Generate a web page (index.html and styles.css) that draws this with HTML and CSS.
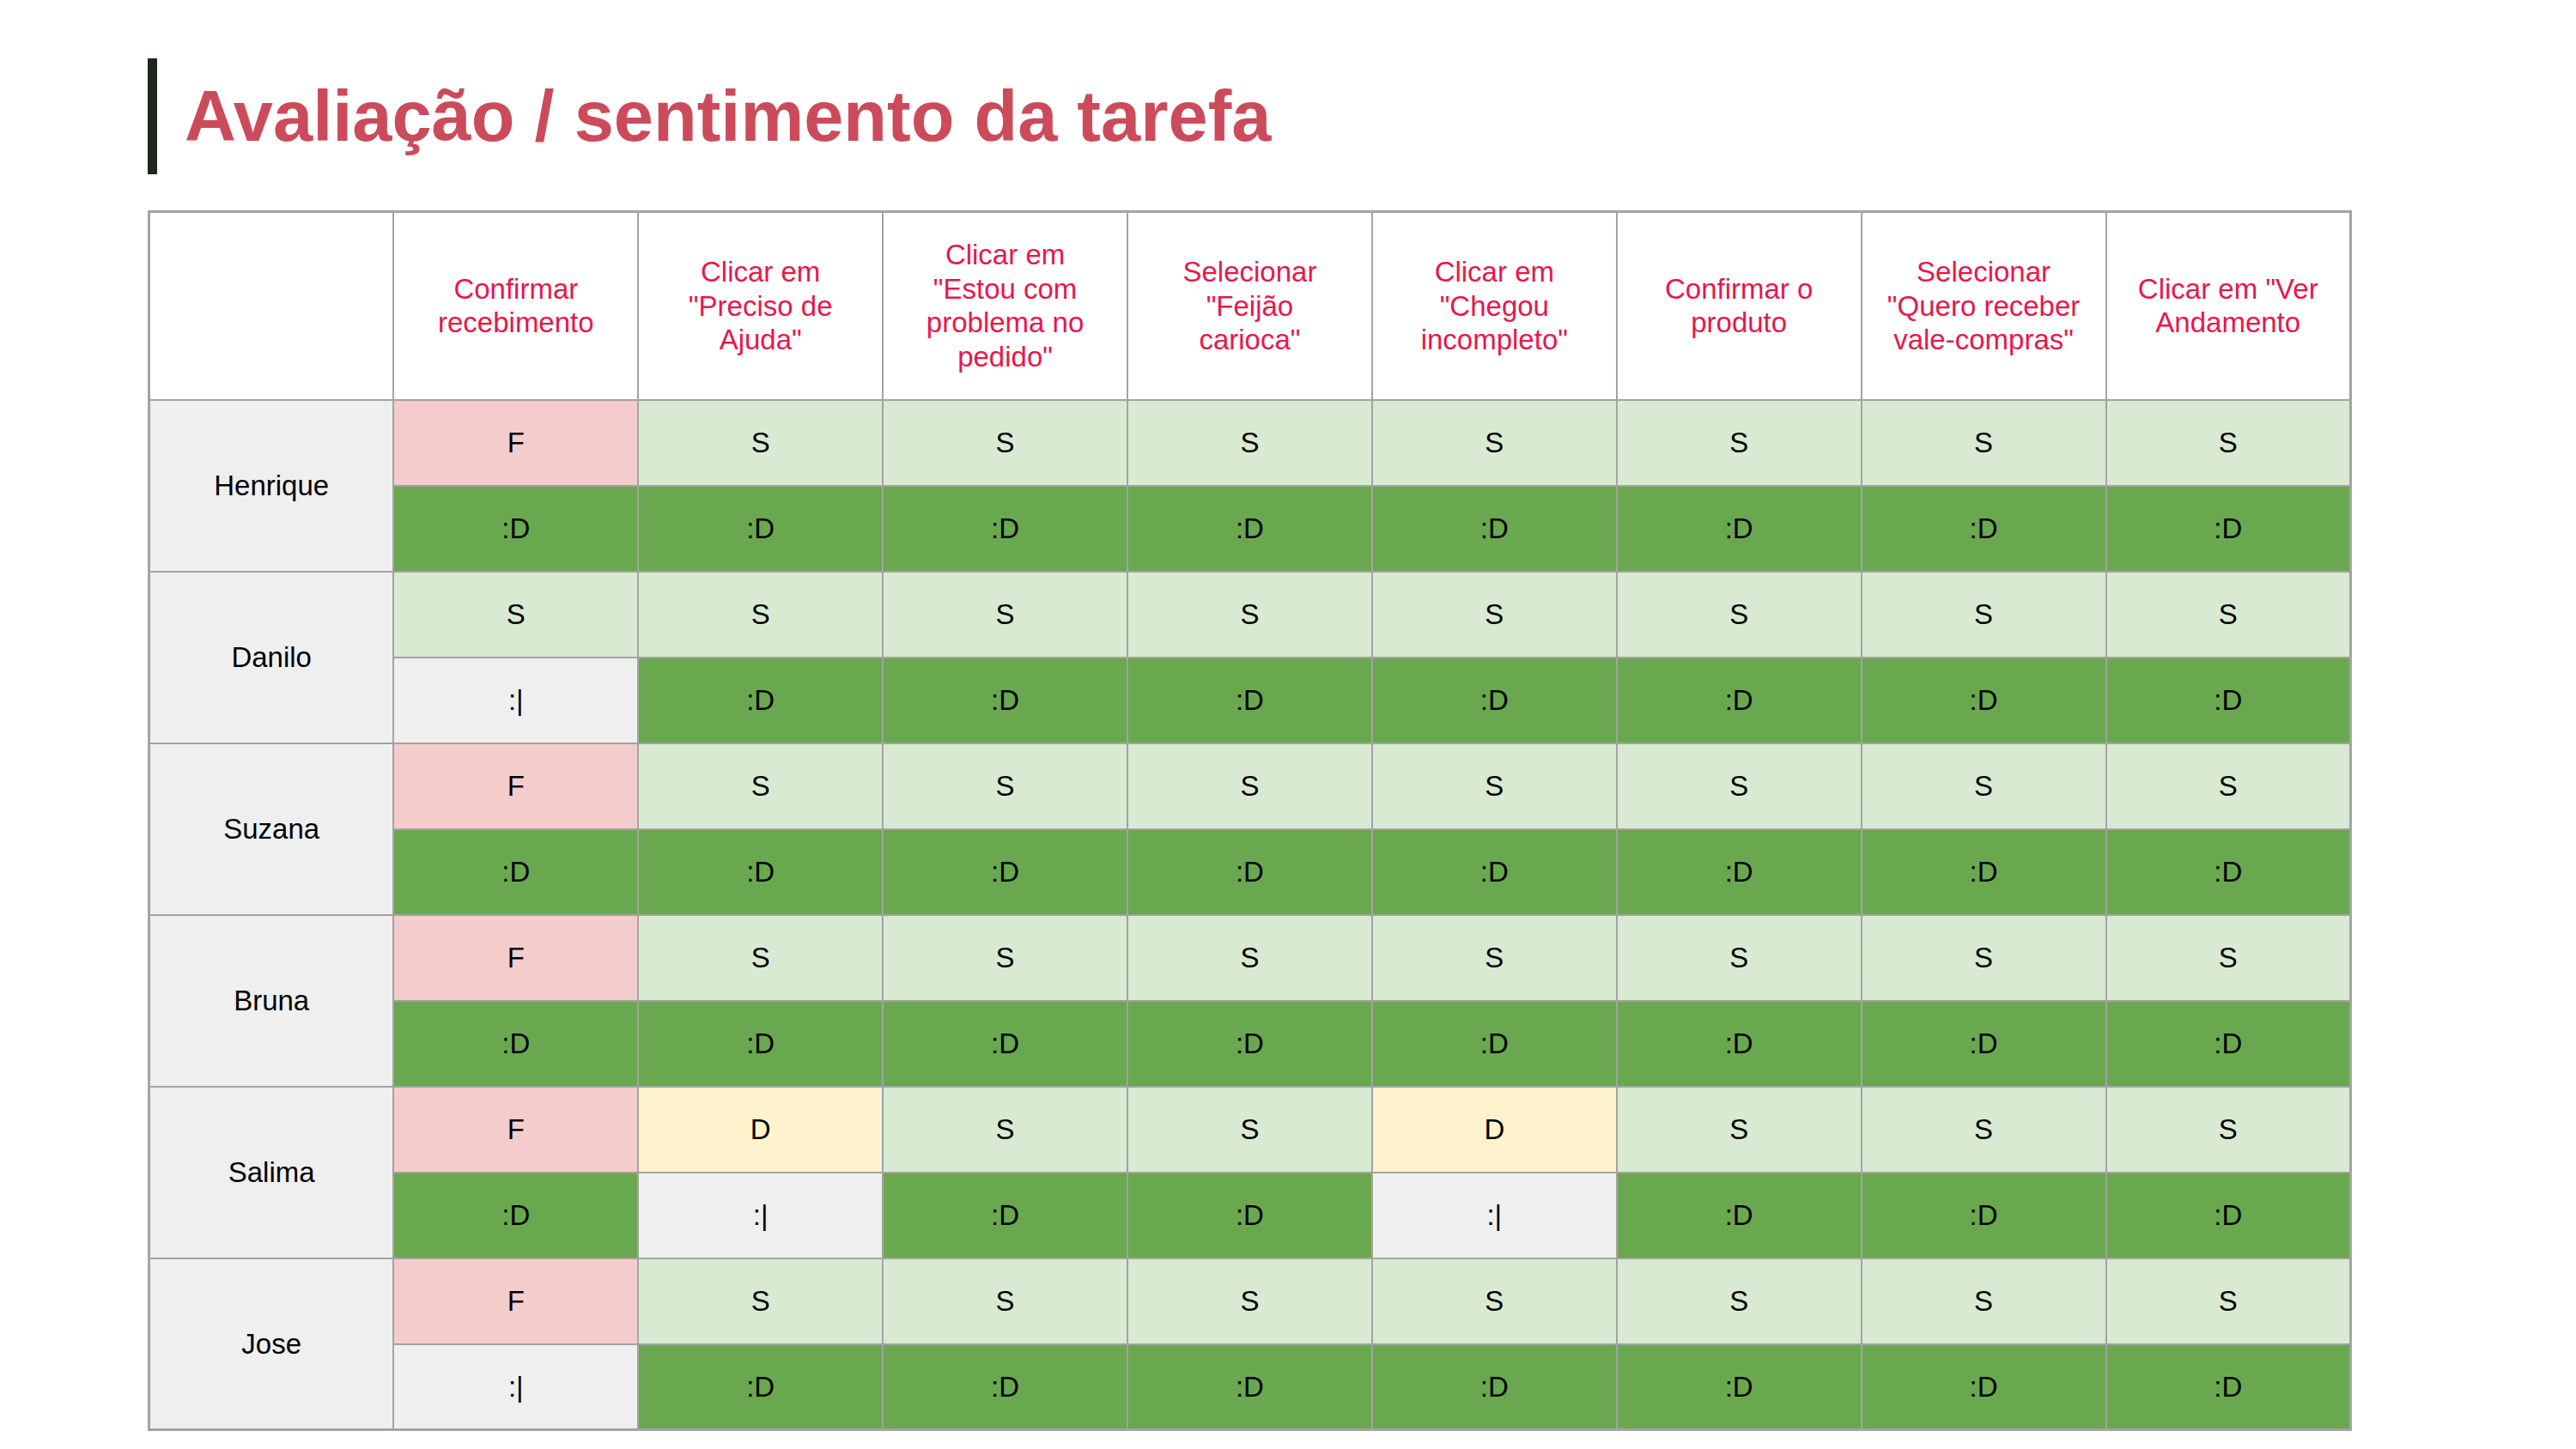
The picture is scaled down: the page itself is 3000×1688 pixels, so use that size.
FILE: index.html
```html
<!DOCTYPE html>
<html lang="pt">
<head>
<meta charset="utf-8">
<title>Avaliação / sentimento da tarefa</title>
<link rel="stylesheet" href="styles.css">
</head>
<body>
<div class="page">
  <header class="title-row">
    <div class="title-bar"></div>
    <h1 class="title">Avaliação / sentimento da tarefa</h1>
  </header>
  <table class="grid">
    <colgroup>
      <col><col><col><col><col><col><col><col><col>
    </colgroup>
    <thead>
      <tr class="head-row">
        <th class="corner"></th>
        <th>Confirmar<br>recebimento</th>
        <th>Clicar em<br>"Preciso de<br>Ajuda"</th>
        <th>Clicar em<br>"Estou com<br>problema no<br>pedido"</th>
        <th>Selecionar<br>"Feijão<br>carioca"</th>
        <th>Clicar em<br>"Chegou<br>incompleto"</th>
        <th>Confirmar o<br>produto</th>
        <th>Selecionar<br>"Quero receber<br>vale-compras"</th>
        <th>Clicar em "Ver<br>Andamento</th>
      </tr>
    </thead>
    <tbody>
      <tr>
        <td class="name" rowspan="2">Henrique</td>
        <td class="f">F</td><td class="s">S</td><td class="s">S</td><td class="s">S</td><td class="s">S</td><td class="s">S</td><td class="s">S</td><td class="s">S</td>
      </tr>
      <tr>
        <td class="happy">:D</td><td class="happy">:D</td><td class="happy">:D</td><td class="happy">:D</td><td class="happy">:D</td><td class="happy">:D</td><td class="happy">:D</td><td class="happy">:D</td>
      </tr>
      <tr>
        <td class="name" rowspan="2">Danilo</td>
        <td class="s">S</td><td class="s">S</td><td class="s">S</td><td class="s">S</td><td class="s">S</td><td class="s">S</td><td class="s">S</td><td class="s">S</td>
      </tr>
      <tr>
        <td class="neutral">:|</td><td class="happy">:D</td><td class="happy">:D</td><td class="happy">:D</td><td class="happy">:D</td><td class="happy">:D</td><td class="happy">:D</td><td class="happy">:D</td>
      </tr>
      <tr>
        <td class="name" rowspan="2">Suzana</td>
        <td class="f">F</td><td class="s">S</td><td class="s">S</td><td class="s">S</td><td class="s">S</td><td class="s">S</td><td class="s">S</td><td class="s">S</td>
      </tr>
      <tr>
        <td class="happy">:D</td><td class="happy">:D</td><td class="happy">:D</td><td class="happy">:D</td><td class="happy">:D</td><td class="happy">:D</td><td class="happy">:D</td><td class="happy">:D</td>
      </tr>
      <tr>
        <td class="name" rowspan="2">Bruna</td>
        <td class="f">F</td><td class="s">S</td><td class="s">S</td><td class="s">S</td><td class="s">S</td><td class="s">S</td><td class="s">S</td><td class="s">S</td>
      </tr>
      <tr>
        <td class="happy">:D</td><td class="happy">:D</td><td class="happy">:D</td><td class="happy">:D</td><td class="happy">:D</td><td class="happy">:D</td><td class="happy">:D</td><td class="happy">:D</td>
      </tr>
      <tr>
        <td class="name" rowspan="2">Salima</td>
        <td class="f">F</td><td class="d">D</td><td class="s">S</td><td class="s">S</td><td class="d">D</td><td class="s">S</td><td class="s">S</td><td class="s">S</td>
      </tr>
      <tr>
        <td class="happy">:D</td><td class="neutral">:|</td><td class="happy">:D</td><td class="happy">:D</td><td class="neutral">:|</td><td class="happy">:D</td><td class="happy">:D</td><td class="happy">:D</td>
      </tr>
      <tr>
        <td class="name" rowspan="2">Jose</td>
        <td class="f">F</td><td class="s">S</td><td class="s">S</td><td class="s">S</td><td class="s">S</td><td class="s">S</td><td class="s">S</td><td class="s">S</td>
      </tr>
      <tr>
        <td class="neutral">:|</td><td class="happy">:D</td><td class="happy">:D</td><td class="happy">:D</td><td class="happy">:D</td><td class="happy">:D</td><td class="happy">:D</td><td class="happy">:D</td>
      </tr>
    </tbody>
  </table>
</div>
</body>
</html>
```
FILE: styles.css
```css
html, body {
  margin: 0;
  padding: 0;
  background: #ffffff;
}

body {
  font-family: "Liberation Sans", Arial, sans-serif;
}

.page {
  padding: 68px 0 0 172px;
}

.title-row {
  display: flex;
  align-items: flex-start;
  gap: 32px;
  height: 135px;
}

.title-bar {
  width: 11px;
  height: 135px;
  background: #1d271c;
}

.title {
  margin: 0;
  font-size: 83px;
  line-height: 135px;
  font-weight: 700;
  color: #cc4b5b;
  white-space: nowrap;
}

.grid {
  margin-top: 42px;
  width: 2567px;
  table-layout: fixed;
  border-collapse: collapse;
  border: 3px solid #a3a3a3;
  font-size: 33px;
  line-height: 39.5px;
}

.grid th,
.grid td {
  border: 2px solid #a3a3a3;
  padding: 0 4px;
  text-align: center;
  vertical-align: middle;
  color: #000000;
}

.grid th {
  font-weight: 400;
  color: #e8174b;
  background: #ffffff;
}

.head-row {
  height: 219px;
}

.grid tbody tr {
  height: 100px;
}

.grid .name {
  background: #efefef;
}

.grid .f {
  background: #f4cccc;
}

.grid .s {
  background: #d9ead3;
}

.grid .d {
  background: #fff2cc;
}

.grid .happy {
  background: #6aa84f;
}

.grid .neutral {
  background: #efefef;
}
```
